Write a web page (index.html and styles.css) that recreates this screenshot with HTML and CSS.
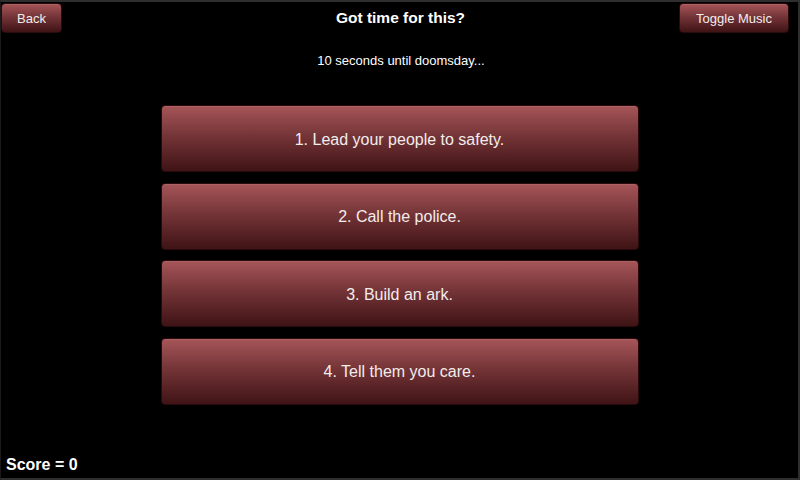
FILE: index.html
```html
<!DOCTYPE html>
<html>
<head>
<meta charset="utf-8">
<link rel="stylesheet" href="styles.css">
</head>
<body>
<div class="frame">
  <header class="topbar">
    <button class="btn small back">Back</button>
    <h1 class="title">Got time for this?</h1>
    <button class="btn small music">Toggle Music</button>
  </header>
  <p class="subtitle">10 seconds until doomsday...</p>
  <main class="choices">
    <button class="btn choice">1. Lead your people to safety.</button>
    <button class="btn choice">2. Call the police.</button>
    <button class="btn choice">3. Build an ark.</button>
    <button class="btn choice">4. Tell them you care.</button>
  </main>
  <footer class="score">Score = 0</footer>
</div>
</body>
</html>
```
FILE: styles.css
```css
* { box-sizing: border-box; }
html, body { margin: 0; padding: 0; background: #000; }
body { width: 800px; height: 480px; overflow: hidden; font-family: "Liberation Sans", Arial, sans-serif; }
.frame {
  width: 800px; height: 480px;
  background: #000;
  border-top: 2px solid #2e2e2e;
  border-right: 2px solid #2e2e2e;
  border-bottom: 2px solid #2e2e2e;
  border-left: 1px solid #1a1a1a;
  display: flex; flex-direction: column;
  color: #fff;
}
.btn {
  font-family: "Liberation Sans", Arial, sans-serif;
  color: #f2ecec;
  border: 1px solid #2a0a0c;
  border-radius: 4px;
  background: linear-gradient(to bottom, #a65558 0%, #753538 45%, #3f1315 100%);
  box-shadow: inset 0 1px 0 rgba(255,255,255,0.08);
  cursor: pointer;
  padding: 0;
}
.topbar {
  display: flex; align-items: flex-start; justify-content: space-between;
  height: 31px; padding-top: 1px;
}
.small { height: 30px; font-size: 13px; }
.back { width: 61px; }
.music { width: 110px; margin-right: 9px; }
.title {
  margin: 0; font-size: 15.5px; font-weight: bold; line-height: 30px;
  flex: 1; text-align: center;
  padding-left: 60px;
}
.subtitle {
  margin: 0; margin-top: 20px; text-align: center; font-size: 13px; line-height: 15px;
  padding-left: 3px;
}
.choices {
  display: flex; flex-direction: column; align-items: center; gap: 10.67px;
  margin-top: 37px;
}
.choice {
  width: 478px; height: 67px; font-size: 16px; padding-top: 2px;
}
.score {
  margin-top: auto; padding: 0 0 4px 5px; font-size: 16px; font-weight: bold; line-height: 18px;
}
```
